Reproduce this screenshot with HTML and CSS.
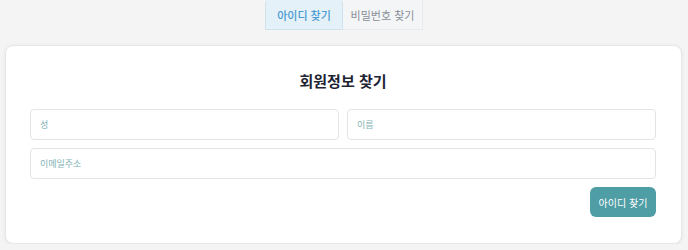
FILE: index.html
```html
<!DOCTYPE html>
<html lang="ko">
<head>
    <meta charset="UTF-8">
    <meta name="viewport" content="width=device-width, initial-scale=1.0">
    <title>회원정보 찾기</title>
    <link rel="stylesheet" href="styles.css">
</head>
<body>
    <div class="tabs">
        <div class="tab active">아이디 찾기</div>
        <div class="tab">비밀번호 찾기</div>
    </div>

    <div class="card">
        <h2 class="title">회원정보 찾기</h2>
        <form class="find-form">
            <div class="row">
                <input type="text" placeholder="성">
                <input type="text" placeholder="이름">
            </div>
            <div class="row">
                <input type="email" placeholder="이메일주소">
            </div>
            <div class="actions">
                <button type="button">아이디 찾기</button>
            </div>
        </form>
    </div>
</body>
</html>
```

FILE: styles.css
```css
body {
    font-family: "Noto Sans CJK KR", "Noto Sans", sans-serif;
    background-color: #f4f4f5;
    margin: 0;
    padding: 0;
}

.tabs {
    display: flex;
    justify-content: center;
    height: 30px;
    margin-bottom: 15px;
}

.tab {
    width: 78px;
    height: 30px;
    display: flex;
    align-items: center;
    justify-content: center;
    font-size: 11px;
    color: #8a8f96;
    background-color: #f3f5f7;
    border: 1px solid #e8ebee;
    border-top: none;
    box-sizing: border-box;
}

.tab.active {
    color: #4a9bd1;
    background-color: #e4f1f8;
    border: 1px solid #cfe3ef;
    border-top: none;
    border-radius: 4px 4px 0 0;
    font-weight: 500;
}

.tab + .tab {
    width: 80px;
    border-left: none;
}

.card {
    margin: 0 6px 0 5px;
    background-color: #fff;
    border: 1px solid #e6e6e6;
    border-radius: 8px;
    box-shadow: 0 1px 4px rgba(0, 0, 0, 0.06);
    padding: 23px 25px 26px 24px;
}

.title {
    margin: 0 0 16px;
    text-align: center;
    font-size: 15px;
    font-weight: 700;
    color: #1e2433;
    line-height: 24px;
}

.find-form {
    display: flex;
    flex-direction: column;
    gap: 8px;
}

.row {
    display: flex;
    gap: 8px;
}

.row input {
    flex: 1;
    min-width: 0;
    height: 31px;
    box-sizing: border-box;
    border: 1px solid #e2e4e6;
    border-radius: 4px;
    padding: 0 9px;
    font-family: inherit;
    font-size: 9px;
    outline: none;
}

.row input::placeholder {
    color: #7fb2b6;
}

.actions {
    display: flex;
    justify-content: flex-end;
}

.actions button {
    width: 66px;
    height: 30px;
    border: none;
    border-radius: 6px;
    background-color: #4f9da5;
    color: #fff;
    font-family: inherit;
    font-size: 10px;
    cursor: pointer;
}
```
